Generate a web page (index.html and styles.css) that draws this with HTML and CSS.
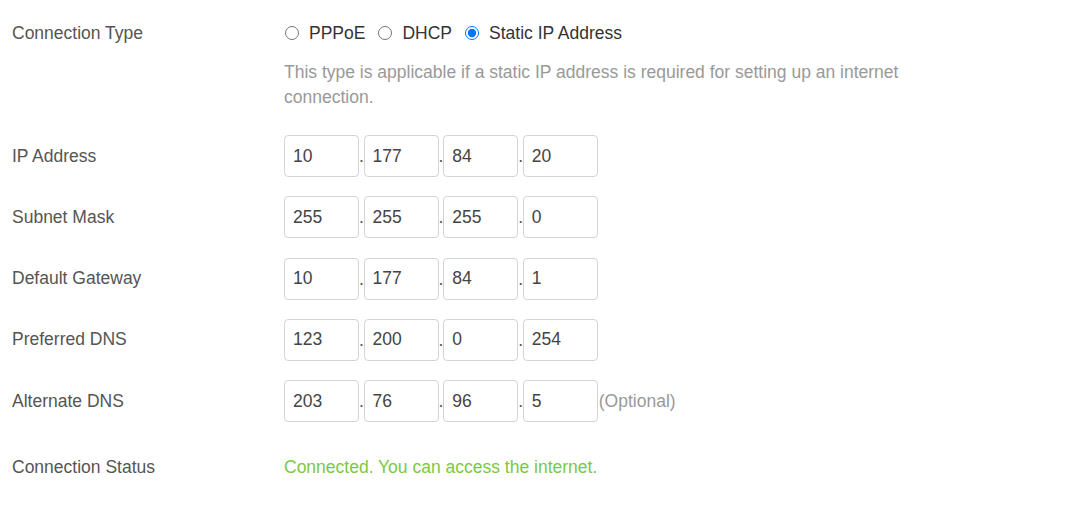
FILE: index.html
```html
<!DOCTYPE html>
<html lang="en">
<head>
<meta charset="utf-8">
<title>Static IP</title>
<link rel="stylesheet" href="styles.css">
</head>
<body>
<div class="form">
  <div class="row row-type">
    <div class="label">Connection Type</div>
    <div class="field">
      <div class="radios">
        <label class="radio"><input type="radio" name="t"><span>PPPoE</span></label>
        <label class="radio"><input type="radio" name="t"><span>DHCP</span></label>
        <label class="radio"><input type="radio" name="t" checked><span>Static IP Address</span></label>
      </div>
    </div>
  </div>
  <div class="row row-desc">
    <div class="label"></div>
    <p class="desc">This type is applicable if a static IP address is required for setting up an internet connection.</p>
  </div>

  <div class="row row-ip">
    <div class="label">IP Address</div>
    <div class="ip">
      <input class="oct" value="10"><span class="dot">.</span><input class="oct" value="177"><span class="dot">.</span><input class="oct" value="84"><span class="dot">.</span><input class="oct" value="20">
    </div>
  </div>
  <div class="row row-ip">
    <div class="label">Subnet Mask</div>
    <div class="ip">
      <input class="oct" value="255"><span class="dot">.</span><input class="oct" value="255"><span class="dot">.</span><input class="oct" value="255"><span class="dot">.</span><input class="oct" value="0">
    </div>
  </div>
  <div class="row row-ip">
    <div class="label">Default Gateway</div>
    <div class="ip">
      <input class="oct" value="10"><span class="dot">.</span><input class="oct" value="177"><span class="dot">.</span><input class="oct" value="84"><span class="dot">.</span><input class="oct" value="1">
    </div>
  </div>
  <div class="row row-ip">
    <div class="label">Preferred DNS</div>
    <div class="ip">
      <input class="oct" value="123"><span class="dot">.</span><input class="oct" value="200"><span class="dot">.</span><input class="oct" value="0"><span class="dot">.</span><input class="oct" value="254">
    </div>
  </div>
  <div class="row row-ip">
    <div class="label">Alternate DNS</div>
    <div class="ip">
      <input class="oct" value="203"><span class="dot">.</span><input class="oct" value="76"><span class="dot">.</span><input class="oct" value="96"><span class="dot">.</span><input class="oct" value="5"><span class="opt">(Optional)</span>
    </div>
  </div>
  <div class="row row-status">
    <div class="label">Connection Status</div>
    <div class="status">Connected. You can access the internet.</div>
  </div>
</div>
</body>
</html>
```

FILE: styles.css
```css
* { box-sizing: border-box; }
html, body { margin: 0; padding: 0; background: #fff; }
body {
  font-family: "Liberation Sans", Arial, sans-serif;
  font-size: 17.5px;
  color: #555;
}
.form {
  padding: 13px 0 0 12px;
}
.row {
  display: flex;
  align-items: center;
}
.label {
  width: 272px;
  flex: none;
  color: #555;
}
.row-type { height: 40px; }
.radios {
  display: flex;
  align-items: center;
  gap: 12px;
}
.radio {
  display: flex;
  align-items: center;
  color: #333;
}
.radio input {
  margin: 0 10px 0 1px;
  width: 14px;
  height: 14px;
  accent-color: #0075ff;
}
.row-desc { margin-top: 7px; }
.desc {
  margin: 0;
  width: 640px;
  color: #999;
  line-height: 25px;
}
.row-ip {
  margin-top: 19.3px;
}
.row-desc + .row-ip { margin-top: 25px; }
.ip {
  display: flex;
  align-items: center;
}
.oct {
  width: 75px;
  height: 42px;
  border: 1px solid #d4d4d4;
  border-radius: 4px;
  padding: 0 8px;
  font-family: "Liberation Sans", Arial, sans-serif;
  font-size: 17.5px;
  color: #444;
  outline: none;
}
.dot {
  width: 4.6px;
  overflow: hidden;
  text-align: center;
  font-size: 17.5px;
  line-height: 20px;
  color: #555;
}
.opt {
  color: #999;
  margin-left: 1px;
}
.row-status {
  margin-top: 24px;
  height: 42px;
}
.status {
  color: #7ac943;
}
```
